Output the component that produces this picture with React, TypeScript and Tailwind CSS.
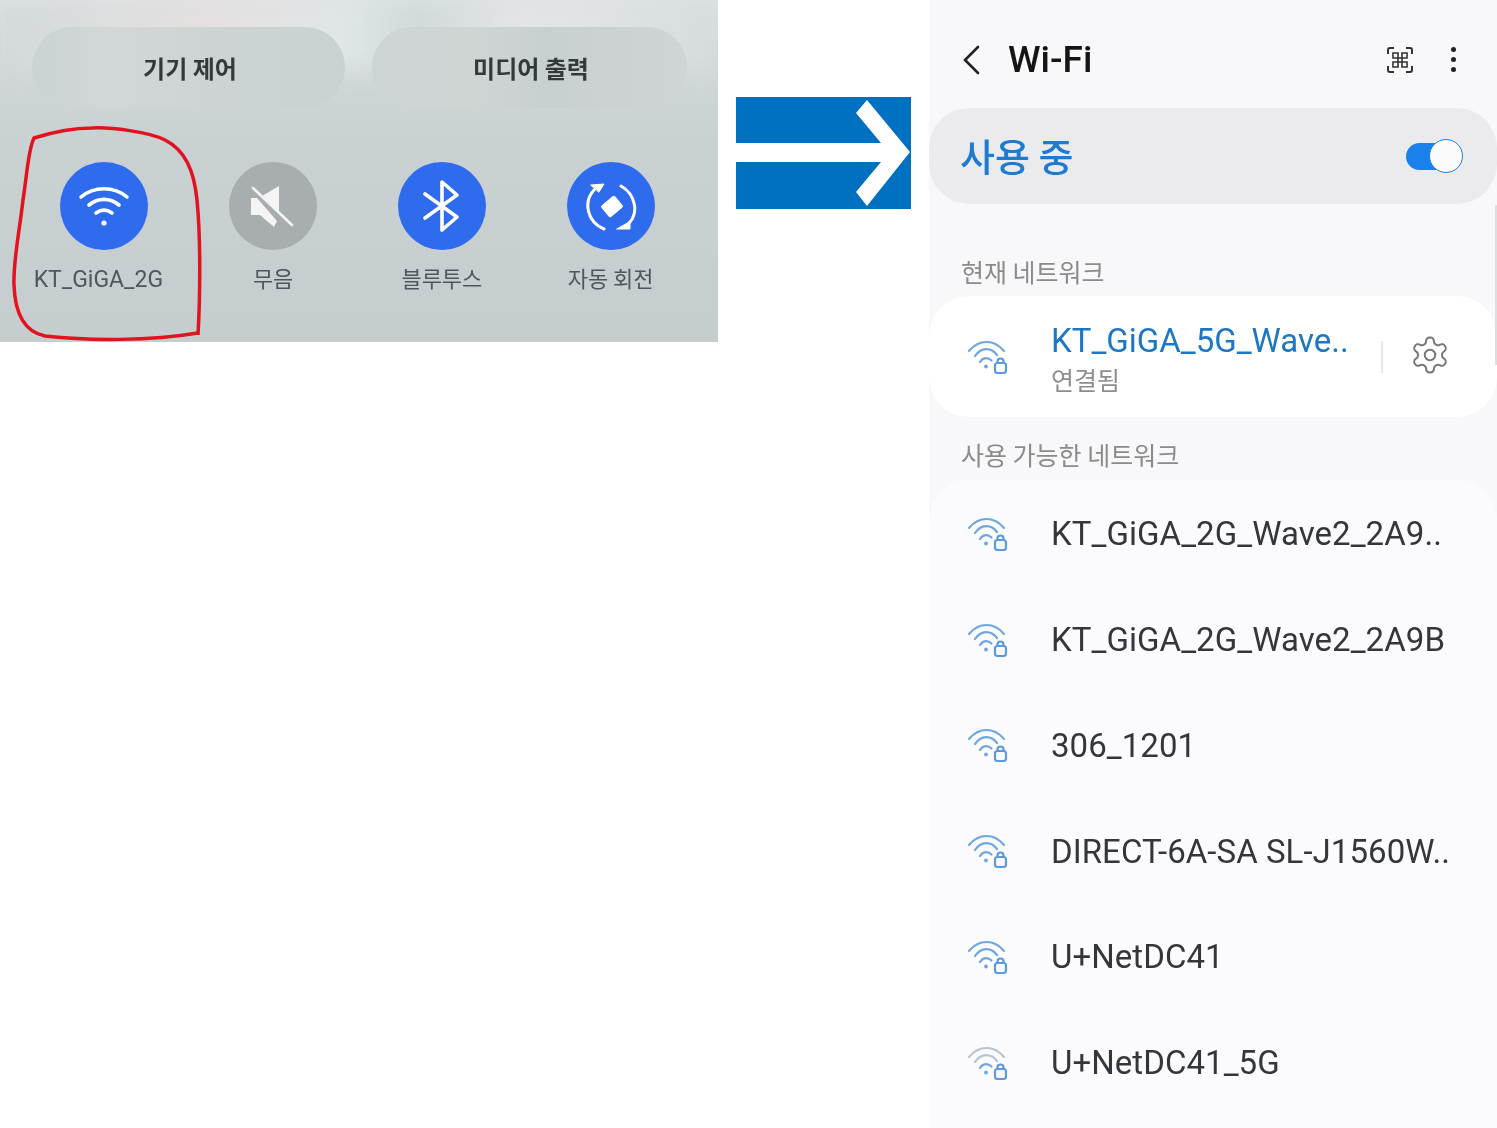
const KO = "font-['Noto_Sans_CJK_KR','Noto_Sans',sans-serif]";

const networks = [
  "KT_GiGA_2G_Wave2_2A9..",
  "KT_GiGA_2G_Wave2_2A9B",
  "306_1201",
  "DIRECT-6A-SA SL-J1560W..",
  "U+NetDC41",
  "U+NetDC41_5G",
];

const WifiLock = ({ weak = false }: { weak?: boolean }) => {
  const outer = weak ? "#b9c4d2" : "#6ea6e2";
  return (
    <svg width="42" height="38" viewBox="0 0 42 38" fill="none" strokeLinecap="round" strokeWidth="2.2">
      <path d="M2 13C12 1 27 1 37 13" stroke={outer} />
      <path d="M8 18C14 9 24 9 30 17" stroke={outer} />
      <path d="M13 24C16 19 21 19 24.5 22.5" stroke="#6ea6e2" />
      <circle cx="19" cy="28.5" r="1.9" fill="#6ea6e2" />
      <rect x="28" y="25" width="11" height="10" rx="2.5" stroke="#5b9ade" />
      <path d="M30.5 25v-1.5a3 3 0 0 1 6 0V25" stroke="#5b9ade" />
    </svg>
  );
};

const Tile = ({ label, color, className, children }: { label: string; color: string; className?: string; children: React.ReactNode }) => (
  <div className="flex flex-col items-center">
    <div className={`w-[88px] h-[88px] rounded-full flex items-center justify-center ${color}`}>{children}</div>
    <span className={`text-[22px] leading-8 text-[#50565a] whitespace-nowrap ${className ?? `mt-[11px] ${KO}`}`}>{label}</span>
  </div>
);

const QuickPanel = () => (
  <div className="relative w-[718px] h-[342px] shrink-0 overflow-hidden blur-[0.4px] bg-[linear-gradient(180deg,#dfe3e4_0%,#d2d8d9_18%,#c9d1d2_40%,#c6cdcf_100%)]">
    <div className="absolute left-0 top-0 w-full h-[70px] blur-md bg-[linear-gradient(90deg,#d3d8d8_0%,#dcdede_15%,#e6dfe0_30%,#e0e6e7_48%,#cfd9da_58%,#e4e4e7_72%,#dfe2e2_85%,#d5dbdc_100%)]" />
    <div className="relative flex gap-[27px] pl-[32px] pt-[27px]">
      <div className={`w-[313px] h-[81px] pl-[3px] rounded-[40px] bg-[linear-gradient(90deg,#cbd3d3_0%,#d2d6d6_25%,#cdd3d4_60%,#c9d2d3_100%)] flex items-center justify-center text-[24px] font-semibold text-[#33383b] ${KO}`}>기기 제어</div>
      <div className={`w-[315px] h-[81px] pl-[3px] rounded-[40px] bg-[linear-gradient(90deg,#cdd4d4_0%,#d0d5d4_30%,#c8d0cf_55%,#cfd4d4_100%)] flex items-center justify-center text-[24px] font-semibold text-[#33383b] ${KO}`}>미디어 출력</div>
    </div>
    <div className="relative grid grid-cols-4 pl-[20px] pr-[23px] mt-[54px]">
      <Tile label="KT_GiGA_2G" color="bg-[#2f6bed]" className="mt-[14px] pr-3 font-['Roboto',sans-serif] text-[23px]">
        <svg width="52" height="46" viewBox="0 0 52 46" fill="none" stroke="white" strokeWidth="3.6" strokeLinecap="round">
          <path d="M3 14C16 3 36 3 49 14" />
          <path d="M11 22C20 14.5 32 14.5 41 22" />
          <path d="M18 30C23 26.5 29 26.5 34 30" />
          <circle cx="26" cy="40" r="2.6" fill="white" stroke="none" />
        </svg>
      </Tile>
      <Tile label="무음" color="bg-[#a8adaf]">
        <svg width="46" height="46" viewBox="0 0 46 46" fill="none">
          <path d="M29 3V30L12 13Z" fill="#f4f4f5" />
          <path d="M1 15H7L27 38L24 44L10 32H1Z" fill="#f4f4f5" />
          <path d="M3 5L42 42" stroke="#f4f4f5" strokeWidth="2.6" strokeLinecap="round" />
        </svg>
      </Tile>
      <Tile label="블루투스" color="bg-[#2f6bed]">
        <svg width="40" height="52" viewBox="0 0 40 52" fill="none" stroke="white" strokeWidth="3.6" strokeLinejoin="round" strokeLinecap="round">
          <path d="M3 14L35 37L20 50V2L35 15L3 38" />
        </svg>
      </Tile>
      <Tile label="자동 회전" color="bg-[#2f6bed]">
        <svg width="52" height="52" viewBox="0 0 52 52" fill="none" stroke="white" strokeWidth="3" strokeLinecap="round">
          <path d="M9 10C-2 22 2 42 19 49" />
          <path d="M36 6C50 14 56 34 41 46" />
          <path d="M6 5L19 4L14 12Z" fill="white" strokeWidth="1" strokeLinejoin="round" />
          <path d="M32 49L45 49L45 42Z" fill="white" strokeWidth="1" strokeLinejoin="round" />
          <rect x="18" y="19" width="18" height="15" rx="2" transform="rotate(-40 27 26.5)" fill="white" stroke="none" />
        </svg>
      </Tile>
    </div>
    <svg className="absolute left-0 top-0" width="210" height="342" viewBox="0 0 210 342" fill="none">
      <path
        d="M198 335C200 300 201 240 197 200C194 170 185 150 165 140C150 132 110 127 92 128C70 128 50 133 34 138C28 150 27 175 23 200C19 235 13 262 14 285C15 315 25 332 45 336C90 341 150 341 198 333"
        stroke="#e3121f"
        strokeWidth="3.5"
      />
    </svg>
  </div>
);

const Arrow = () => (
  <div className="w-[175px] h-[112px] shrink-0 mt-[97px] ml-[18px] mr-[18px] bg-[#0070c0]">
    <svg width="175" height="112" viewBox="0 0 175 112">
      <path d="M0 46H145L120 16L131 3L174 55L131 109L120 95L145 65H0Z" fill="white" />
    </svg>
  </div>
);

const WifiPanel = () => (
  <div className="relative w-[568px] h-[1128px] shrink-0 overflow-hidden blur-[0.4px] bg-[#f8f7f9] font-['Roboto',sans-serif]">
    <div className="h-[108px] flex items-center pl-[33px] pr-[41px] pt-[11px]">
      <svg width="18" height="30" viewBox="0 0 18 30" fill="none" stroke="#222" strokeWidth="2.6" strokeLinecap="round">
        <path d="M16 2L3 15L16 28" />
      </svg>
      <span className="ml-[28px] text-[37px] font-medium text-[#151515] leading-none">Wi-Fi</span>
      <svg className="ml-auto" width="26" height="26" viewBox="0 0 26 26" fill="none" stroke="#333" strokeWidth="2">
        <path d="M1 7V3Q1 1 3 1H7M19 1H23Q25 1 25 3V7M25 19V23Q25 25 23 25H19M7 25H3Q1 25 1 23V19" />
        <path d="M6 6H11V11H6ZM15 6H20V11H15ZM6 15H11V20H6ZM11 11H15V15H11ZM15 15H20V20H15Z" strokeWidth="1.6" />
      </svg>
      <div className="ml-[38px] flex flex-col gap-[5px]">
        <span className="w-[5px] h-[5px] rounded-full bg-[#222]" />
        <span className="w-[5px] h-[5px] rounded-full bg-[#222]" />
        <span className="w-[5px] h-[5px] rounded-full bg-[#222]" />
      </div>
    </div>

    <div className="h-[96px] rounded-[40px] bg-[#ebebed] flex items-center pl-[31px] pr-[34px]">
      <span className={`text-[38px] leading-[52px] -mt-[2px] font-medium text-[#1f7bd0] ${KO}`}>사용 중</span>
      <div className="relative ml-auto w-[57px] h-[34px]">
        <div className="absolute left-0 top-[4px] w-[46px] h-[27px] rounded-full bg-[#1a80ea]" />
        <div className="absolute right-0 top-0 w-[34px] h-[34px] rounded-full bg-[#fbfbfb] border border-[#1a80ea]" />
      </div>
    </div>

    <div className={`mt-[49px] pl-[32px] h-[36px] text-[25px] leading-[36px] text-[#8b8b8b] ${KO}`}>현재 네트워크</div>

    <div className="mt-[7px] h-[121px] rounded-[40px] bg-white flex items-center pl-[38px] pr-[46px]">
      <WifiLock />
      <div className="ml-[42px] flex flex-col">
        <span className="text-[33px] leading-[44px] text-[#1c78c4]">KT_GiGA_5G_Wave..</span>
        <span className={`text-[25px] leading-[32px] text-[#8e8e8e] ${KO}`}>연결됨</span>
      </div>
      <div className="ml-auto w-[2px] h-[32px] bg-[#e9e9eb]" />
      <svg className="ml-[26px] -mt-[3px]" width="42" height="42" viewBox="0 0 24 24" fill="none" stroke="#777" strokeWidth="1.15" strokeLinecap="round" strokeLinejoin="round">
        <path d="M12.22 2h-.44a2 2 0 0 0-2 2v.18a2 2 0 0 1-1 1.73l-.43.25a2 2 0 0 1-2 0l-.15-.08a2 2 0 0 0-2.73.73l-.22.38a2 2 0 0 0 .73 2.73l.15.1a2 2 0 0 1 1 1.72v.51a2 2 0 0 1-1 1.74l-.15.09a2 2 0 0 0-.73 2.73l.22.38a2 2 0 0 0 2.73.73l.15-.08a2 2 0 0 1 2 0l.43.25a2 2 0 0 1 1 1.73V20a2 2 0 0 0 2 2h.44a2 2 0 0 0 2-2v-.18a2 2 0 0 1 1-1.73l.43-.25a2 2 0 0 1 2 0l.15.08a2 2 0 0 0 2.73-.73l.22-.39a2 2 0 0 0-.73-2.73l-.15-.08a2 2 0 0 1-1-1.74v-.5a2 2 0 0 1 1-1.74l.15-.09a2 2 0 0 0 .73-2.73l-.22-.38a2 2 0 0 0-2.73-.73l-.15.08a2 2 0 0 1-2 0l-.43-.25a2 2 0 0 1-1-1.73V4a2 2 0 0 0-2-2z" />
        <circle cx="12" cy="12" r="3" />
      </svg>
    </div>

    <div className={`mt-[19px] pl-[32px] h-[36px] text-[25px] leading-[36px] text-[#8b8b8b] ${KO}`}>사용 가능한 네트워크</div>

    <div className="mt-[8px] rounded-t-[40px] bg-[#fbfbfd] pt-[1px] h-[700px]">
      {networks.map((name, i) => (
        <div key={name} className="h-[105.8px] flex items-center pl-[38px]">
          <WifiLock weak={i === 5} />
          <span className="ml-[42px] text-[33px] tracking-[0.05px] text-[#33373b] whitespace-nowrap">{name}</span>
        </div>
      ))}
    </div>

    <div className="absolute right-0 top-[205px] w-[2px] h-[160px] bg-[#dedee0]" />
  </div>
);

export default function App() {
  return (
    <div className="flex w-[1497px] h-[1128px] bg-white overflow-hidden items-start">
      <QuickPanel />
      <Arrow />
      <WifiPanel />
    </div>
  );
}
